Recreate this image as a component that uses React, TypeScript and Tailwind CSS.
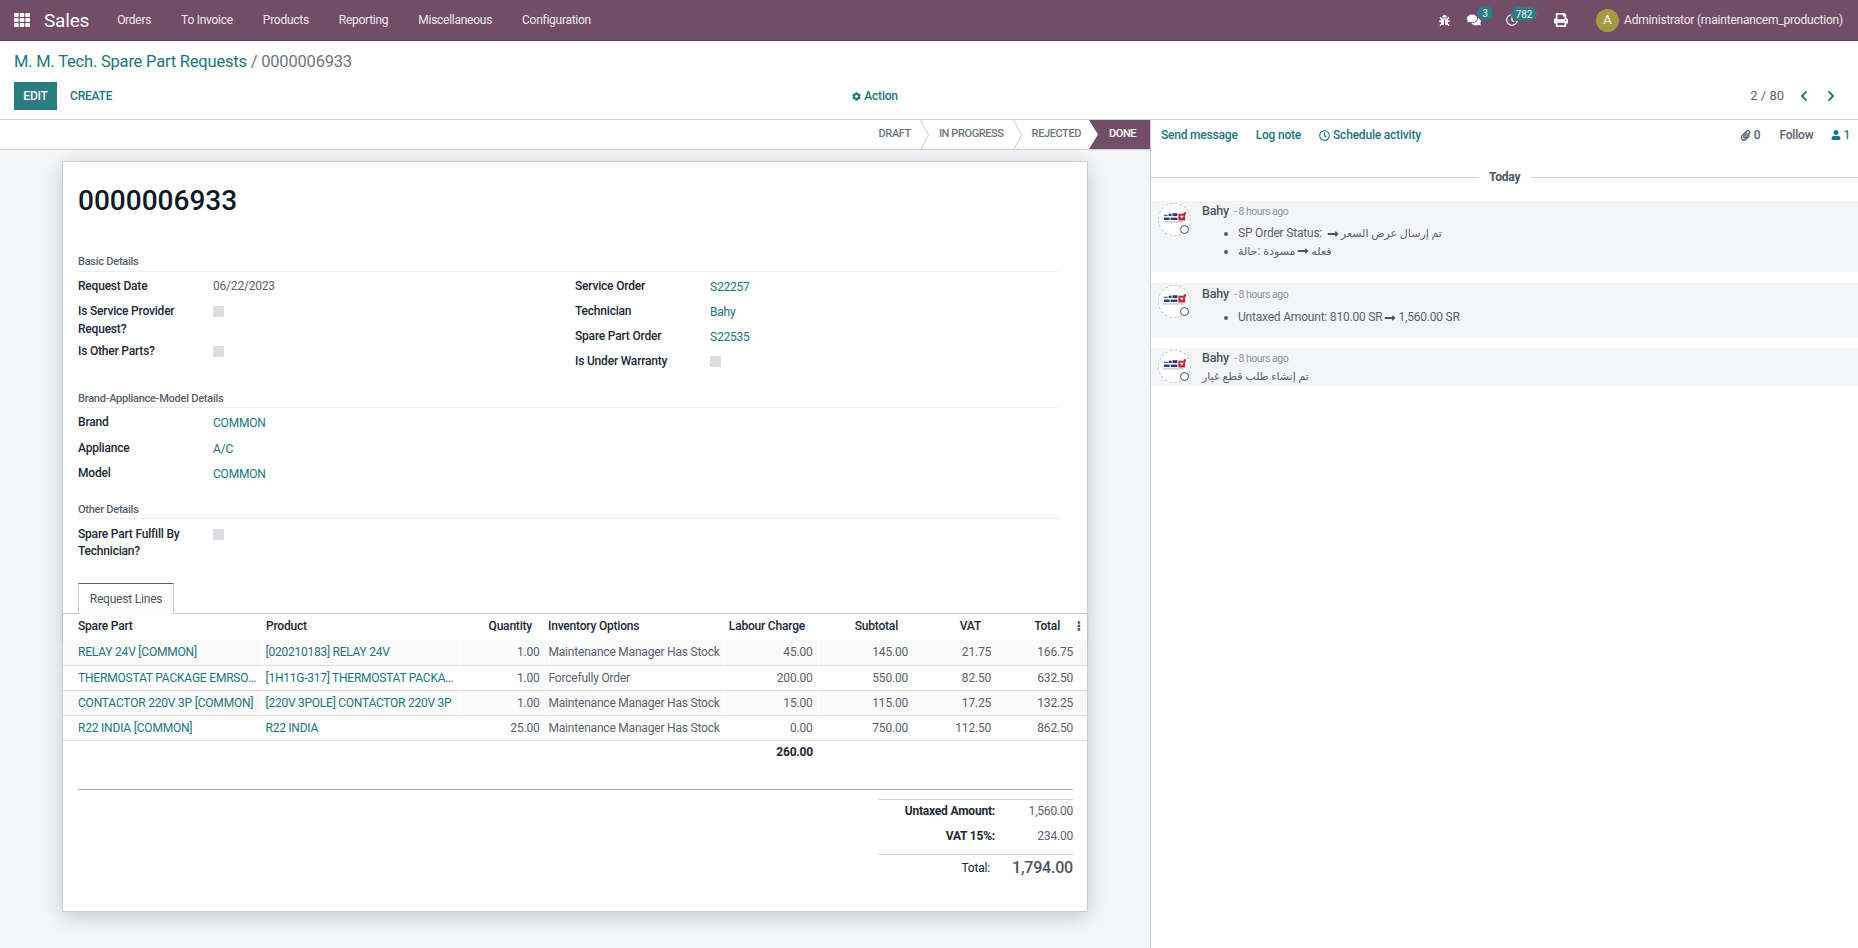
import type { FC, ReactNode } from 'react';
import {
  FaBug,
  FaChevronLeft,
  FaChevronRight,
  FaCog,
  FaComments,
  FaEllipsisV,
  FaLongArrowAltRight,
  FaPaperclip,
  FaPrint,
  FaRegClock,
  FaTh,
  FaUser,
} from 'react-icons/fa';

const LINK = 'text-[#1c7680]';

const Chevron: FC = () => (
  <svg width="9" height="30" viewBox="0 0 9 30" className="mx-[9.5px] shrink-0" fill="none" stroke="#c9ccd2">
    <path d="M0.5 0 L8.5 15 L0.5 30" />
  </svg>
);

const SectionLabel: FC<{ children: ReactNode; className?: string }> = ({ children, className }) => (
  <div className={`border-b border-[#eeeff2] text-[11px] leading-[15px] font-medium tracking-[-0.25px] text-[#5a6270] ${className ?? ''}`}>
    {children}
  </div>
);

const Field: FC<{ label: ReactNode; children?: ReactNode; className?: string }> = ({ label, children, className }) => (
  <div className={`flex ${className ?? 'h-[25px]'}`}>
    <div className="w-[135px] pr-2 text-[12px] leading-[18px] font-medium text-[#212936]">{label}</div>
    <div className="text-[12px] leading-[18px] text-[#5a6270]">{children}</div>
  </div>
);

const Check: FC = () => <div className="mt-[4px] h-[11px] w-[11px] bg-[#dcdde2]" />;

const Val: FC<{ children: ReactNode }> = ({ children }) => <span className={`${LINK} relative top-px`}>{children}</span>;

const Ar: FC<{ children: ReactNode }> = ({ children }) => <bdi className="text-[11px] tracking-normal">{children}</bdi>;

const lines = [
  ['RELAY 24V [COMMON]', '[020210183] RELAY 24V', '1.00', 'Maintenance Manager Has Stock', '45.00', '145.00', '21.75', '166.75'],
  ['THERMOSTAT PACKAGE EMRSON [COMMON]', '[1H11G-317] THERMOSTAT PACKAGE EMRSON', '1.00', 'Forcefully Order', '200.00', '550.00', '82.50', '632.50'],
  ['CONTACTOR 220V 3P [COMMON]', '[220V 3POLE] CONTACTOR 220V 3P', '1.00', 'Maintenance Manager Has Stock', '15.00', '115.00', '17.25', '132.25'],
  ['R22 INDIA [COMMON]', 'R22 INDIA', '25.00', 'Maintenance Manager Has Stock', '0.00', '750.00', '112.50', '862.50'],
];

const Avatar: FC = () => (
  <div className="relative mt-[2px] h-[33px] w-[33px] shrink-0 rounded-full border border-dashed border-[#c4c6cc] bg-white">
    <svg viewBox="0 0 32 32" className="h-full w-full">
      {/* company logo, small marks only */}
      <rect x="10" y="10" width="3" height="2.5" fill="#2a3f7a" />
      <rect x="14" y="9.5" width="5" height="3" fill="#2a3f7a" />
      <rect x="5" y="11" width="4" height="1.5" fill="#5a6a9a" />
      <rect x="5" y="14" width="6" height="2.5" fill="#2a3f7a" />
      <rect x="12" y="14" width="7" height="2.5" fill="#2a3f7a" />
      <rect x="4" y="18" width="21" height="1" fill="#aab2cc" />
      <path d="M20 10h7v7h-7z" fill="#c8283c" />
      <path d="M21.5 12l4 0-2 3z" fill="#fff" />
      <rect x="25.5" y="8.5" width="2.5" height="2.5" fill="#c8283c" />
    </svg>
    <div className="absolute right-[1px] bottom-[1px] h-[9px] w-[9px] rounded-full border-[1.5px] border-[#4c5560] bg-white" />
  </div>
);

const MsgHead: FC = () => (
  <div className="flex items-baseline leading-[16px]">
    <span className="text-[12.5px] font-medium text-[#4c5560]">Bahy</span>
    <span className="ml-[5px] text-[10.5px] tracking-[-0.5px] text-[#8f949c]">- 8 hours ago</span>
  </div>
);

const Arrow: FC = () => <FaLongArrowAltRight className="mx-[2px] inline-block text-[12px] text-[#4c5560]" />;

export default function App() {
  return (
    <div className="flex h-[948px] w-full flex-col overflow-hidden bg-white font-[Roboto,'DejaVu_Sans',sans-serif] text-[12px] tracking-[-0.2px] text-[#5a6270]">
      {/* navbar */}
      <nav className="flex h-[41px] shrink-0 items-center border-b border-[#5f3f57] bg-[#734c68] text-white">
        <FaTh className="ml-[14px] text-[16px]" />
        <span className="ml-[14px] text-[19px] leading-none">Sales</span>
        <div className="ml-[13px] flex text-[12px] tracking-[-0.27px] text-[#f0e9ee]">
          {['Orders', 'To Invoice', 'Products', 'Reporting', 'Miscellaneous', 'Configuration'].map((m) => (
            <span key={m} className="px-[15px]">{m}</span>
          ))}
        </div>
        <div className="ml-auto flex items-center pr-[15px]">
          <FaBug className="text-[11px]" />
          <div className="relative ml-[17px]">
            <FaComments className="text-[14px]" />
            <span className="absolute top-[-7px] left-[10px] flex h-[14px] w-[16px] items-center justify-center rounded-full bg-[#2a7d83] text-[10px]">3</span>
          </div>
          <div className="relative ml-[25px]">
            <FaRegClock className="text-[12px]" />
            <span className="absolute top-[-7px] left-[5px] flex h-[14px] w-[26px] items-center justify-center rounded-full bg-[#2a7d83] text-[10px]">782</span>
          </div>
          <FaPrint className="ml-[36px] text-[14px]" />
          <div className="ml-[28px] flex h-[23px] w-[23px] items-center justify-center rounded-full bg-[#a59a40] text-[13px]">A</div>
          <span className="ml-[5px] text-[12px] text-[#f0e9ee]">Administrator (maintenancem_production)</span>
        </div>
      </nav>

      {/* control panel */}
      <div className="h-[79px] shrink-0 border-b border-[#cfd0d4] px-[14px]">
        <div className={`pt-[10px] text-[16.5px] leading-[21px] ${LINK}`}>
          M. M. Tech. Spare Part Requests <span className="text-[#6f7680]">/ 0000006933</span>
        </div>
        <div className="relative mt-[10px] flex items-center">
          <button className="h-[28px] w-[43px] bg-[#2a7d83] text-[12px] font-medium text-white">EDIT</button>
          <button className={`ml-[13px] text-[12px] font-medium ${LINK}`}>CREATE</button>
          <div className={`ml-[740px] flex items-center text-[12px] font-medium ${LINK}`}>
            <FaCog className="mr-[3px] text-[9px]" />
            Action
          </div>
          <span className="ml-auto text-[13px] tracking-normal">2 / 80</span>
          <FaChevronLeft className={`ml-[14px] text-[12px] ${LINK}`} />
          <FaChevronRight className={`ml-[15px] mr-[7px] text-[12px] ${LINK}`} />
        </div>
      </div>

      <div className="flex min-h-0 flex-1">
        {/* form */}
        <div className="w-[1151px] shrink-0 border-r border-[#c9ccd2] bg-[#f4f5f9]">
          <div className="flex h-[30px] items-center justify-end border-b border-[#cfd0d4] bg-white text-[11px] font-medium tracking-[-0.4px] text-[#6f7680]">
            <span>DRAFT</span>
            <Chevron />
            <span>IN PROGRESS</span>
            <Chevron />
            <span>REJECTED</span>
            <div className="ml-[8px] flex h-[29px] w-[61px] items-center bg-[#734c68] pl-[20px] text-white [clip-path:polygon(0_0,100%_0,100%_100%,0_100%,9px_50%)]">
              DONE
            </div>
          </div>

          <div className="mt-[11px] ml-[62px] h-[751px] w-[1026px] border border-[#c9ccd2] bg-white shadow-[0_5px_20px_-1px_rgba(0,0,0,0.2)]">
            <div className="pr-[29px] pl-[15px]">
              <h1 className="mt-[19px] text-[28px] leading-[40px] font-medium tracking-normal text-[#101828]">0000006933</h1>
              <SectionLabel className="mt-[33px] h-[18px]">Basic Details</SectionLabel>
              <div className="grid grid-cols-[497px_1fr] pt-[5px]">
                <div>
                  <Field label="Request Date"><span>06/22/2023</span></Field>
                  <Field label={<>Is Service Provider<br />Request?</>} className="h-[40px]"><Check /></Field>
                  <Field label="Is Other Parts?"><Check /></Field>
                </div>
                <div>
                  <Field label="Service Order"><Val>S22257</Val></Field>
                  <Field label="Technician"><Val>Bahy</Val></Field>
                  <Field label="Spare Part Order"><Val>S22535</Val></Field>
                  <Field label="Is Under Warranty"><Check /></Field>
                </div>
              </div>
              <SectionLabel className="mt-[14px] h-[17px]">Brand-Appliance-Model Details</SectionLabel>
              <div className="pt-[5px]">
                <Field label="Brand" className="h-[26px]"><Val>COMMON</Val></Field>
                <Field label="Appliance"><Val>A/C</Val></Field>
                <Field label="Model"><Val>COMMON</Val></Field>
              </div>
              <SectionLabel className="mt-[13px] h-[17px]">Other Details</SectionLabel>
              <div className="pt-[6px]">
                <Field
                  label={
                    <>
                      <span className="block pt-[1px] leading-[17px]">Spare Part Fulfill By</span>
                      <span className="block leading-[17px]">Technician?</span>
                    </>
                  }
                  className="h-[36px]"
                >
                  <Check />
                </Field>
              </div>
            </div>

            {/* tabs */}
            <div className="mt-[22px] h-[31px] border-b border-[#c9ccd2] pl-[15px]">
              <div className="flex h-[31px] w-[96px] items-center justify-center border border-b-0 border-[#c9ccd2] border-t-[#6b5a68] bg-white text-[12px] text-[#4c5560]">
                Request Lines
              </div>
            </div>

            <table className="w-[1024px] table-fixed border-collapse text-[12px]">
              <colgroup>
                <col className="w-[199px]" />
                <col className="w-[198px]" />
                <col className="w-[84px]" />
                <col className="w-[179px]" />
                <col className="w-[95px]" />
                <col className="w-[100px]" />
                <col className="w-[83px]" />
                <col className="w-[86px]" />
              </colgroup>
              <thead>
                <tr className="h-[26px] font-medium text-[#212936] shadow-[0_2px_4px_rgba(0,0,0,0.12)]">
                  <th className="pb-[2px] pl-[15px] text-left font-medium">Spare Part</th>
                  <th className="pb-[2px] pl-[4px] text-left font-medium">Product</th>
                  <th className="pr-[12px] pb-[2px] text-right font-medium">Quantity</th>
                  <th className="pb-[2px] pl-[4px] text-left font-medium">Inventory Options</th>
                  <th className="pr-[13px] pb-[2px] text-right font-medium">Labour Charge</th>
                  <th className="pr-[20px] pb-[2px] text-right font-medium">Subtotal</th>
                  <th className="pr-[20px] pb-[2px] text-right font-medium">VAT</th>
                  <th className="relative pr-[27px] pb-[2px] text-right font-medium">
                    Total
                    <FaEllipsisV className="absolute top-[7px] right-[3px] text-[10px] text-[#4c5560]" />
                  </th>
                </tr>
              </thead>
              <tbody>
                {lines.map((r, i) => (
                  <tr key={r[0]} className={`h-[25px] border-b border-[#dcdde1] ${i % 2 === 0 ? 'bg-[#fafafa]' : ''}`}>
                    <td className={`truncate pr-[4px] pl-[15px] ${LINK}`}>{r[0]}</td>
                    <td className={`truncate border-l border-white pr-[3px] pl-[3px] tracking-[-0.25px] ${LINK}`}>{r[1]}</td>
                    <td className="border-l border-white pr-[4px] text-right">{r[2]}</td>
                    <td className="truncate border-l border-white pl-[4px]">{r[3]}</td>
                    <td className="border-l border-white pr-[5px] text-right">{r[4]}</td>
                    <td className="border-l border-white pr-[10px] text-right">{r[5]}</td>
                    <td className="pr-[10px] text-right">{r[6]}</td>
                    <td className="pr-[14px] text-right">{r[7]}</td>
                  </tr>
                ))}
                <tr className="h-[24px]">
                  <td colSpan={4} />
                  <td className="pr-[5px] text-right font-bold text-[#212936]">260.00</td>
                  <td colSpan={3} />
                </tr>
              </tbody>
            </table>

            <div className="mt-[25px] mr-[14px] ml-[15px] border-t border-[#aaabb0]" />
            <div className="mt-[9px] mr-[14px] ml-auto w-[195px]">
              <div className="border-t border-[#cfd0d4]">
                <div className="flex h-[22px] items-center justify-end">
                  <span className="mr-[26px] font-bold text-[#212936]">Untaxed Amount:</span>
                  <span className="w-[52px] text-right">1,560.00</span>
                </div>
                <div className="flex h-[27px] items-center justify-end">
                  <span className="mr-[26px] font-bold text-[#212936]">VAT 15%:</span>
                  <span className="w-[52px] text-right">234.00</span>
                </div>
              </div>
              <div className="mt-[5px] flex h-[26px] items-center justify-end border-t border-[#cfd0d4]">
                <span className="mr-[22px] text-[#212936]">Total:</span>
                <span className="text-[16px] font-medium text-[#4c5560]">1,794.00</span>
              </div>
            </div>
          </div>
        </div>

        {/* chatter */}
        <div className="min-w-0 flex-1">
          <div className="flex h-[30px] items-center pr-[8px] pl-[10px] text-[12px] font-medium">
            <span className={LINK}>Send message</span>
            <span className={`ml-[18px] ${LINK}`}>Log note</span>
            <FaRegClock className={`ml-[18px] mr-[3px] text-[11px] ${LINK}`} />
            <span className={LINK}>Schedule activity</span>
            <div className="ml-auto flex items-center font-normal text-[#5a6270]">
              <FaPaperclip className="text-[11px]" />
              <span className="ml-[3px] font-medium">0</span>
              <span className="ml-[19px] font-medium">Follow</span>
              <FaUser className={`ml-[18px] text-[10px] ${LINK}`} />
              <span className={`ml-[2px] font-medium ${LINK}`}>1</span>
            </div>
          </div>
          <div className="mt-[18px] flex items-center text-[12px] font-bold text-[#4c5560]">
            <div className="w-[327px] border-t border-[#cfd0d4]" />
            <span className="mx-[11px]">Today</span>
            <div className="flex-1 border-t border-[#cfd0d4]" />
          </div>

          <div className="mt-[15px] flex h-[71px] gap-[11px] bg-[#f4f5f9] px-[7px]">
            <Avatar />
            <div className="pt-[2px]">
              <MsgHead />
              <ul className="mt-[5px] list-disc pl-[36px] text-[12px] leading-[17.5px]">
                <li>
                  SP Order Status: <Arrow /><Ar>تم إرسال عرض السعر</Ar>
                </li>
                <li>
                  <Ar>حالة</Ar>: <Ar>مسودة</Ar><Arrow /><Ar>فعله</Ar>
                </li>
              </ul>
            </div>
          </div>
          <div className="mt-[11px] flex h-[54px] gap-[11px] bg-[#f4f5f9] px-[7px]">
            <Avatar />
            <div className="pt-[3px]">
              <MsgHead />
              <ul className="mt-[5px] list-disc pl-[36px] text-[12px] leading-[18px]">
                <li>
                  Untaxed Amount: 810.00 SR<Arrow />1,560.00 SR
                </li>
              </ul>
            </div>
          </div>
          <div className="mt-[11px] flex h-[38px] gap-[11px] bg-[#f4f5f9] px-[7px]">
            <Avatar />
            <div className="pt-[2px]">
              <MsgHead />
              <div className="leading-[18px]"><Ar>تم إنشاء طلب قطع غيار</Ar></div>
            </div>
          </div>
        </div>
      </div>
    </div>
  );
}
